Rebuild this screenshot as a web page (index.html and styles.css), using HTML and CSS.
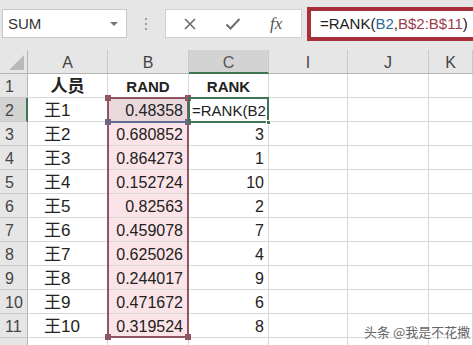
FILE: index.html
```html
<!DOCTYPE html>
<html>
<head>
<meta charset="utf-8">
<link rel="stylesheet" href="styles.css">
</head>
<body>
<div class="app">
  <div class="fbar">
    <div class="namebox"><span class="nb-text">SUM</span><span class="nb-arrow"></span></div>
    <div class="grip"><i></i><i></i><i></i></div>
    <div class="btns">
      <svg class="ico x" width="14" height="14" viewBox="0 0 14 14"><path d="M2 2 L12 12 M12 2 L2 12" stroke="#6b6b6b" stroke-width="1.6" fill="none"/></svg>
      <svg class="ico ck" width="16" height="14" viewBox="0 0 16 14"><path d="M1.5 7.5 L5.5 11.5 L14.5 2" stroke="#6b6b6b" stroke-width="2" fill="none"/></svg>
      <span class="fx">fx</span>
    </div>
    <div class="formula">=RANK(<span class="rb">B2</span>,<span class="rr">B$2:B$11</span>)</div>
  </div>
  <div class="sheet">
    <div class="grid">
      <div class="corner"><span class="tri"></span></div>
      <div class="ch">A</div><div class="ch">B</div><div class="ch on">C</div><div class="ch">I</div><div class="ch">J</div><div class="ch">K</div>

      <div class="rh">1</div><div class="c cn b zh">人员</div><div class="c b ctr">RAND</div><div class="c b ctr">RANK</div><div class="c"></div><div class="c"></div><div class="c"></div>
      <div class="rh on">2</div><div class="c zh nm">王1</div><div class="c r act">0.48358</div><div class="c edit">=RANK(B2</div><div class="c"></div><div class="c"></div><div class="c"></div>
      <div class="rh">3</div><div class="c zh nm">王2</div><div class="c r sel">0.680852</div><div class="c r">3</div><div class="c"></div><div class="c"></div><div class="c"></div>
      <div class="rh">4</div><div class="c zh nm">王3</div><div class="c r sel">0.864273</div><div class="c r">1</div><div class="c"></div><div class="c"></div><div class="c"></div>
      <div class="rh">5</div><div class="c zh nm">王4</div><div class="c r sel">0.152724</div><div class="c r">10</div><div class="c"></div><div class="c"></div><div class="c"></div>
      <div class="rh">6</div><div class="c zh nm">王5</div><div class="c r sel">0.82563</div><div class="c r">2</div><div class="c"></div><div class="c"></div><div class="c"></div>
      <div class="rh">7</div><div class="c zh nm">王6</div><div class="c r sel">0.459078</div><div class="c r">7</div><div class="c"></div><div class="c"></div><div class="c"></div>
      <div class="rh">8</div><div class="c zh nm">王7</div><div class="c r sel">0.625026</div><div class="c r">4</div><div class="c"></div><div class="c"></div><div class="c"></div>
      <div class="rh">9</div><div class="c zh nm">王8</div><div class="c r sel">0.244017</div><div class="c r">9</div><div class="c"></div><div class="c"></div><div class="c"></div>
      <div class="rh">10</div><div class="c zh nm">王9</div><div class="c r sel">0.471672</div><div class="c r">6</div><div class="c"></div><div class="c"></div><div class="c"></div>
      <div class="rh">11</div><div class="c zh nm">王10</div><div class="c r sel">0.319524</div><div class="c r">8</div><div class="c"></div><div class="c"></div><div class="c"></div>
      <div class="rh"></div><div class="c"></div><div class="c"></div><div class="c"></div><div class="c"></div><div class="c"></div><div class="c"></div>
    </div>
    <div class="overlay">
      <div class="refb2"><span class="h hbl"></span><span class="h hbr"></span></div>
      <div class="range"><span class="h mtl"></span><span class="h mtr"></span><span class="h mbl"></span><span class="h mbr"></span></div>
      <div class="editbox"><span class="gh"></span></div>
    </div>
    <div class="wm">头条 @我是不花撒</div>
  </div>
</div>
</body>
</html>
```

FILE: styles.css
```css
* { box-sizing: border-box; }
html, body { margin: 0; padding: 0; }
body {
  width: 473px; height: 345px; overflow: hidden;
  background: #e6e6e6;
  font-family: "Liberation Sans", "Noto Sans CJK SC", sans-serif;
  color: #222;
}
.app { width: 473px; height: 345px; overflow: hidden; }

.fbar {
  height: 50px;
  display: flex;
  align-items: flex-start;
  padding-top: 9px;
  background: #e6e6e6;
}
.namebox {
  margin-left: 2px;
  width: 125px; height: 29px;
  background: #fff;
  border: 1px solid #c8c8c8;
  display: flex; align-items: center; justify-content: space-between;
  padding: 0 8px 0 5px;
}
.nb-text { font-size: 15px; color: #333; }
.nb-arrow {
  width: 0; height: 0;
  border-left: 4px solid transparent; border-right: 4px solid transparent;
  border-top: 4px solid #777;
}
.grip {
  width: 38px; height: 29px;
  display: flex; flex-direction: column; align-items: center; justify-content: center; gap: 3px;
}
.grip i { display: block; width: 2px; height: 2px; background: #9a9a9a; }
.btns {
  width: 137px; height: 29px;
  background: #fff;
  border: 1px solid #d0d0d0;
  display: flex; align-items: center;
  padding-left: 17px;
}
.ico.x { margin-right: 28px; }
.ico.ck { margin-right: 29px; }
.fx {
  font-family: "Liberation Serif", serif;
  font-style: italic;
  font-size: 17px;
  color: #555;
}
.formula {
  margin-left: 5px;
  margin-top: -2px;
  flex: 1;
  height: 34px;
  background: #fff;
  border: 4px solid #a8303b;
  border-right-width: 0;
  font-size: 15px;
  line-height: 26px;
  padding-left: 9px;
  color: #222;
  white-space: nowrap;
  overflow: hidden;
}
.rb { color: #2f6d95; }
.rr { color: #9c3a48; }

.sheet { position: relative; background: #fff; }
.grid, .overlay {
  display: grid;
  grid-template-columns: 28px 80px 81px 80px 79px 81px 1fr;
  grid-template-rows: repeat(13, 24px);
}
.overlay {
  position: absolute; left: 0; top: 0; right: 0; bottom: 0;
  pointer-events: none;
}
.corner {
  background: #e6e6e6;
  border-right: 1px solid #b5b5b5;
  border-bottom: 1px solid #b5b5b5;
  position: relative;
}
.tri {
  position: absolute; right: 3px; bottom: 3px;
  width: 0; height: 0;
  border-left: 15px solid transparent;
  border-bottom: 15px solid #b9b9b9;
}
.ch {
  background: #e6e6e6;
  border-right: 1px solid #c9c9c9;
  border-bottom: 1px solid #b5b5b5;
  text-align: center;
  font-size: 16px;
  line-height: 26px;
  color: #444;
}
.ch.on { background: #d3d3d3; border-bottom: 2px solid #3f7550; color: #555; }
.rh {
  background: #e6e6e6;
  border-right: 1px solid #b5b5b5;
  border-bottom: 1px solid #c9c9c9;
  font-size: 16px;
  line-height: 25px;
  padding-left: 5px;
  color: #444;
}
.rh.on { background: #d3d3d3; border-right: 2px solid #3f7550; }
.c {
  border-right: 1px solid #d8d8d8;
  border-bottom: 1px solid #d8d8d8;
  font-size: 16px;
  line-height: 25px;
  white-space: nowrap;
  overflow: hidden;
}
.c.r { text-align: right; padding-right: 4px; }
.c.ctr { text-align: center; }
.c.b { font-weight: bold; font-size: 15px; }
.c.cn { text-align: center; font-size: 17px; }
.zh { font-family: "Liberation Sans", "Noto Sans CJK SC", sans-serif; }
.c.nm { padding-left: 16px; font-size: 17px; }
.c.sel { background: #fbe4e7; padding-right: 5px; }
.c.act { background: #e9d9dd; padding-right: 5px; }
.c.edit { font-size: 15px; padding-left: 3px; }

.range {
  grid-column: 3; grid-row: 3 / 13;
  margin: -1px 0 0 -1px;
  border: 2px solid #8e5663;
  position: relative;
}
.refb2 {
  grid-column: 3; grid-row: 3;
  margin: -1px 0 -1px -1px;
  border: 2px solid #5d6e92;
  position: relative;
}
.editbox {
  grid-column: 4; grid-row: 3;
  margin: -1px 0 -1px -1px;
  border: 2px solid #3f7550;
  position: relative;
}
.h { position: absolute; width: 6px; height: 6px; }
.mtl, .mtr, .mbl, .mbr { background: #8e5663; }
.mtl { left: -4px; top: -4px; }
.mtr { right: -4px; top: -4px; }
.mbl { left: -4px; bottom: -4px; }
.mbr { right: -4px; bottom: -4px; }
.hbl, .hbr { background: #5d6e92; bottom: -4px; }
.hbl { left: -4px; }
.hbr { right: -4px; }
.gh { position: absolute; right: -4px; bottom: -4px; width: 5px; height: 5px; background: #3f7550; border: 1px solid #fff; }

.wm {
  position: absolute;
  left: 364px; top: 272px;
  font-family: "Noto Sans CJK SC", sans-serif;
  font-size: 13px;
  color: #666;
  text-shadow: 0 0 2px #fff, 0 0 2px #fff;
}
```
